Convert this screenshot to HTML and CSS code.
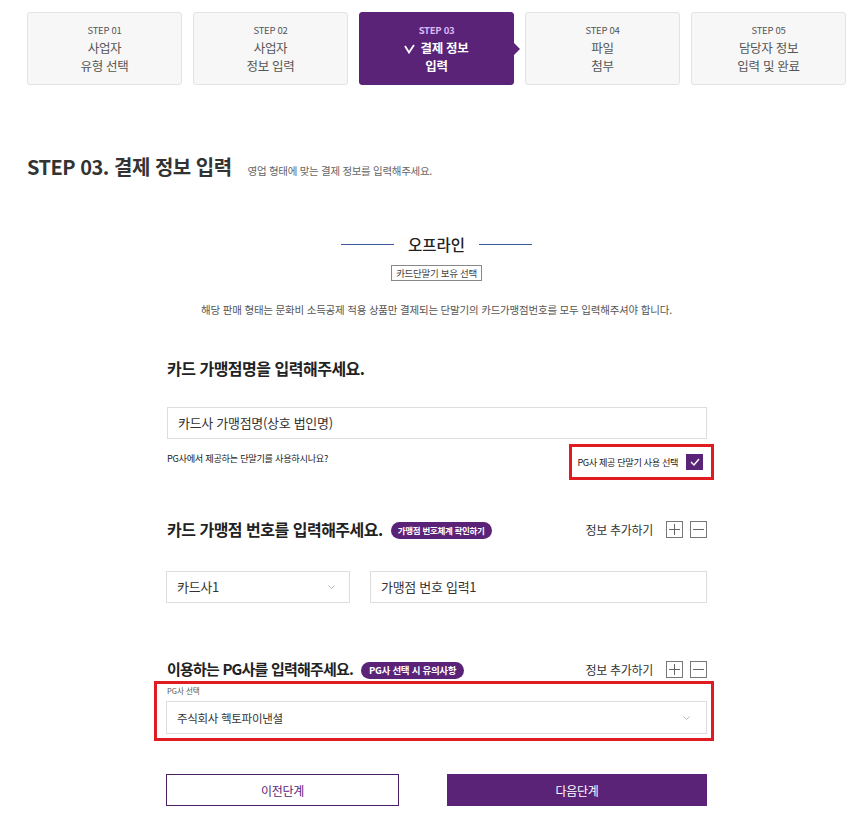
FILE: index.html
```html
<!DOCTYPE html>
<html lang="ko">
<head>
<meta charset="utf-8">
<title>결제 정보 입력</title>
<link rel="stylesheet" href="styles.css">
</head>
<body>
<div class="steps">
  <div class="step">
    <div class="step-no">STEP 01</div>
    <div class="step-name">사업자<br>유형 선택</div>
  </div>
  <div class="step">
    <div class="step-no">STEP 02</div>
    <div class="step-name">사업자<br>정보 입력</div>
  </div>
  <div class="step step-active">
    <div class="step-no">STEP 03</div>
    <div class="step-name"><svg class="step-check" width="11" height="10" viewBox="0 0 11 10"><polyline points="1,2 5,8.5 10,1" fill="none" stroke="#fff" stroke-width="1.8"/></svg>결제 정보<br>입력</div>
  </div>
  <div class="step">
    <div class="step-no">STEP 04</div>
    <div class="step-name">파일<br>첨부</div>
  </div>
  <div class="step">
    <div class="step-no">STEP 05</div>
    <div class="step-name">담당자 정보<br>입력 및 완료</div>
  </div>
</div>

<div class="page-title">
  <h1 class="title">STEP 03. 결제 정보 입력</h1>
  <span class="title-sub">영업 형태에 맞는 결제 정보를 입력해주세요.</span>
</div>

<div class="form">
  <div class="offline">
    <span class="offline-line"></span>
    <span class="offline-text">오프라인</span>
    <span class="offline-line"></span>
  </div>
  <div class="center-row"><span class="tag">카드단말기 보유 선택</span></div>
  <p class="desc">해당 판매 형태는 문화비 소득공제 적용 상품만 결제되는 단말기의 카드가맹점번호를 모두 입력해주셔야 합니다.</p>

  <h2 class="sec-title sec1">카드 가맹점명을 입력해주세요.</h2>
  <div class="field field-full">카드사 가맹점명(상호 법인명)</div>
  <div class="question-row">
    <span class="question">PG사에서 제공하는 단말기를 사용하시나요?</span>
    <label class="pg-check">
      <span class="pg-check-text">PG사 제공 단말기 사용 선택</span>
      <span class="checkbox"><svg width="10" height="8" viewBox="0 0 10 8"><polyline points="1,4 4,7 9,1" fill="none" stroke="#fff" stroke-width="1.4"/></svg></span>
    </label>
  </div>

  <div class="sec-row sec2">
    <div class="sec-left">
      <h2 class="sec-title">카드 가맹점 번호를 입력해주세요.</h2>
      <span class="pill">가맹점 번호체계 확인하기</span>
    </div>
    <div class="add-ctrl">
      <span class="add-text">정보 추가하기</span>
      <span class="ctrl-box"><svg width="15" height="15" viewBox="0 0 15 15"><path d="M7.5 2v11M2 7.5h11" stroke="#666" stroke-width="1"/></svg></span>
      <span class="ctrl-box"><svg width="15" height="15" viewBox="0 0 15 15"><path d="M2 7.5h11" stroke="#666" stroke-width="1"/></svg></span>
    </div>
  </div>
  <div class="num-row">
    <div class="field select select-card">카드사1<svg class="chev" width="7" height="4" viewBox="0 0 7 4"><polyline points="0.5,0.5 3.5,3.5 6.5,0.5" fill="none" stroke="#aaa" stroke-width="0.8"/></svg></div>
    <div class="field field-num">가맹점 번호 입력1</div>
  </div>

  <div class="sec-row sec3">
    <div class="sec-left">
      <h2 class="sec-title sec-title-pg">이용하는 PG사를 입력해주세요.</h2>
      <span class="pill pill-lg">PG사 선택 시 유의사항</span>
    </div>
    <div class="add-ctrl">
      <span class="add-text">정보 추가하기</span>
      <span class="ctrl-box"><svg width="15" height="15" viewBox="0 0 15 15"><path d="M7.5 2v11M2 7.5h11" stroke="#666" stroke-width="1"/></svg></span>
      <span class="ctrl-box"><svg width="15" height="15" viewBox="0 0 15 15"><path d="M2 7.5h11" stroke="#666" stroke-width="1"/></svg></span>
    </div>
  </div>
  <div class="pg-box">
    <div class="pg-label">PG사 선택</div>
    <div class="field select select-pg">주식회사 헥토파이낸셜<svg class="chev" width="7" height="4" viewBox="0 0 7 4"><polyline points="0.5,0.5 3.5,3.5 6.5,0.5" fill="none" stroke="#aaa" stroke-width="0.8"/></svg></div>
  </div>

  <div class="btn-row">
    <button class="btn btn-prev">이전단계</button>
    <button class="btn btn-next">다음단계</button>
  </div>
</div>
</body>
</html>
```

FILE: styles.css
```css
* { box-sizing: border-box; }
body {
  margin: 0;
  background: #fff;
  font-family: "Noto Sans CJK KR", "Noto Sans", sans-serif;
  color: #333;
}

/* steps */
.steps {
  display: grid;
  grid-template-columns: repeat(5, 1fr);
  column-gap: 11px;
  width: 819px;
  margin: 12px 0 0 27px;
}
.step {
  position: relative;
  height: 73px;
  background: #f7f7f7;
  border: 1px solid #e3e3e3;
  border-radius: 3px;
  text-align: center;
  padding-top: 11px;
  color: #555;
}
.step-no {
  font-size: 9.5px;
  line-height: 12px;
  letter-spacing: -0.3px;
  margin-bottom: 3px;
}
.step-name {
  font-size: 12.5px;
  line-height: 18px;
  letter-spacing: -0.3px;
}
.step-active {
  background: #5a2378;
  border-color: #5a2378;
}
.step-active .step-no { color: #d9b7f2; font-weight: 700; }
.step-active .step-name { color: #fff; font-weight: 700; }
.step-active::after {
  content: "";
  position: absolute;
  right: -7px;
  top: 30px;
  border-left: 6px solid #5a2378;
  border-top: 6px solid transparent;
  border-bottom: 6px solid transparent;
}
.step-check { margin-right: 5px; vertical-align: -1px; }

/* title */
.page-title {
  display: flex;
  align-items: baseline;
  gap: 16px;
  margin: 68px 0 0 27px;
}
.title {
  margin: 0;
  font-size: 20px;
  line-height: 28px;
  font-weight: 700;
  color: #333;
  letter-spacing: -0.5px;
}
.title-sub {
  font-size: 10.5px;
  color: #666;
  letter-spacing: -0.3px;
}

/* form column */
.form {
  width: 541px;
  margin-left: 166px;
}
.offline {
  display: flex;
  justify-content: center;
  align-items: center;
  gap: 14px;
  margin-top: 53px;
  height: 20px;
}
.offline-line {
  width: 53px;
  height: 1px;
  background: #3d5a9e;
}
.offline-text {
  font-size: 15.5px;
  font-weight: 500;
  color: #222;
  line-height: 20px;
}
.center-row {
  display: flex;
  justify-content: center;
  margin-top: 11px;
}
.tag {
  display: inline-block;
  height: 16px;
  line-height: 14px;
  padding: 0 4px;
  border: 1px solid #888;
  font-size: 9.5px;
  color: #444;
  letter-spacing: -0.3px;
}
.desc {
  margin: 22px 0 0;
  text-align: center;
  font-size: 10.5px;
  line-height: 14px;
  color: #555;
  letter-spacing: -0.2px;
}

.sec-title {
  margin: 0;
  font-size: 16px;
  line-height: 22px;
  font-weight: 700;
  color: #222;
  letter-spacing: -0.5px;
}
.sec-title-pg { font-size: 15px; letter-spacing: -0.8px; }
.sec1 { margin-top: 40px; margin-left: 1px; }

.field {
  height: 32px;
  border: 1px solid #ddd;
  background: #fff;
  font-size: 13px;
  color: #333;
  line-height: 30px;
  padding-left: 10px;
  letter-spacing: -0.3px;
}
.field-full { margin-top: 28px; margin-left: 1px; }

.question-row {
  display: flex;
  justify-content: space-between;
  align-items: flex-start;
  margin-top: 5px;
  margin-right: -7px;
  padding-left: 1px;
}
.question {
  font-size: 9.2px;
  color: #222;
  margin-top: 7px;
  letter-spacing: -0.3px;
}
.pg-check {
  display: flex;
  align-items: center;
  gap: 8px;
  height: 36px;
  border: 3px solid #e01b22;
  padding: 0 8px 0 5px;
}
.pg-check-text {
  font-size: 9.2px;
  color: #222;
  letter-spacing: -0.4px;
}
.checkbox {
  width: 17px;
  height: 16px;
  background: #5a2378;
  display: flex;
  align-items: center;
  justify-content: center;
}

.sec-row {
  display: flex;
  justify-content: space-between;
  align-items: center;
  height: 22px;
  padding-left: 1px;
}
.sec2 { margin-top: 38px; }
.sec3 { margin-top: 55px; }
.sec-left {
  display: flex;
  align-items: center;
  gap: 8px;
}
.pill {
  display: inline-block;
  height: 17px;
  line-height: 17px;
  padding: 0 7px;
  border-radius: 9px;
  background: #5a2378;
  color: #fff;
  font-size: 8.5px;
  font-weight: 700;
  letter-spacing: -0.3px;
  margin-top: 2px;
}
.pill-lg {
  font-size: 9.5px;
  padding: 0 8px;
}
.add-ctrl {
  display: flex;
  align-items: center;
}
.add-text {
  font-size: 12px;
  color: #333;
  margin-right: 13px;
  letter-spacing: -0.3px;
}
.ctrl-box {
  width: 17px;
  height: 17px;
  border: 1px solid #777;
  display: flex;
  align-items: center;
  justify-content: center;
}
.ctrl-box + .ctrl-box { margin-left: 7px; }

.num-row {
  display: flex;
  gap: 20px;
  margin-top: 31px;
}
.select {
  position: relative;
  display: flex;
  align-items: center;
  justify-content: space-between;
  padding-right: 14px;
}
.select-card { width: 184px; }
.field-num { flex: 1; }
.chev { flex: none; }

.pg-box {
  margin: 1px -7px 0 -12px;
  border: 3px solid #e01b22;
  padding: 2px 4px 4px 9px;
}
.pg-label {
  font-size: 7.5px;
  line-height: 10px;
  color: #555;
  margin-bottom: 5px;
  padding-left: 1px;
}
.select-pg {
  height: 33px;
  font-size: 11.5px;
  padding-right: 16px;
}

.btn-row {
  display: flex;
  justify-content: space-between;
  margin-top: 33px;
}
.btn {
  height: 32px;
  font-family: inherit;
  font-size: 12px;
  letter-spacing: -0.3px;
  cursor: pointer;
}
.btn-prev {
  width: 233px;
  background: #fff;
  border: 1px solid #4a1f63;
  color: #5a2378;
}
.btn-next {
  width: 260px;
  background: #5a2378;
  border: 1px solid #5a2378;
  color: #fff;
}
```
